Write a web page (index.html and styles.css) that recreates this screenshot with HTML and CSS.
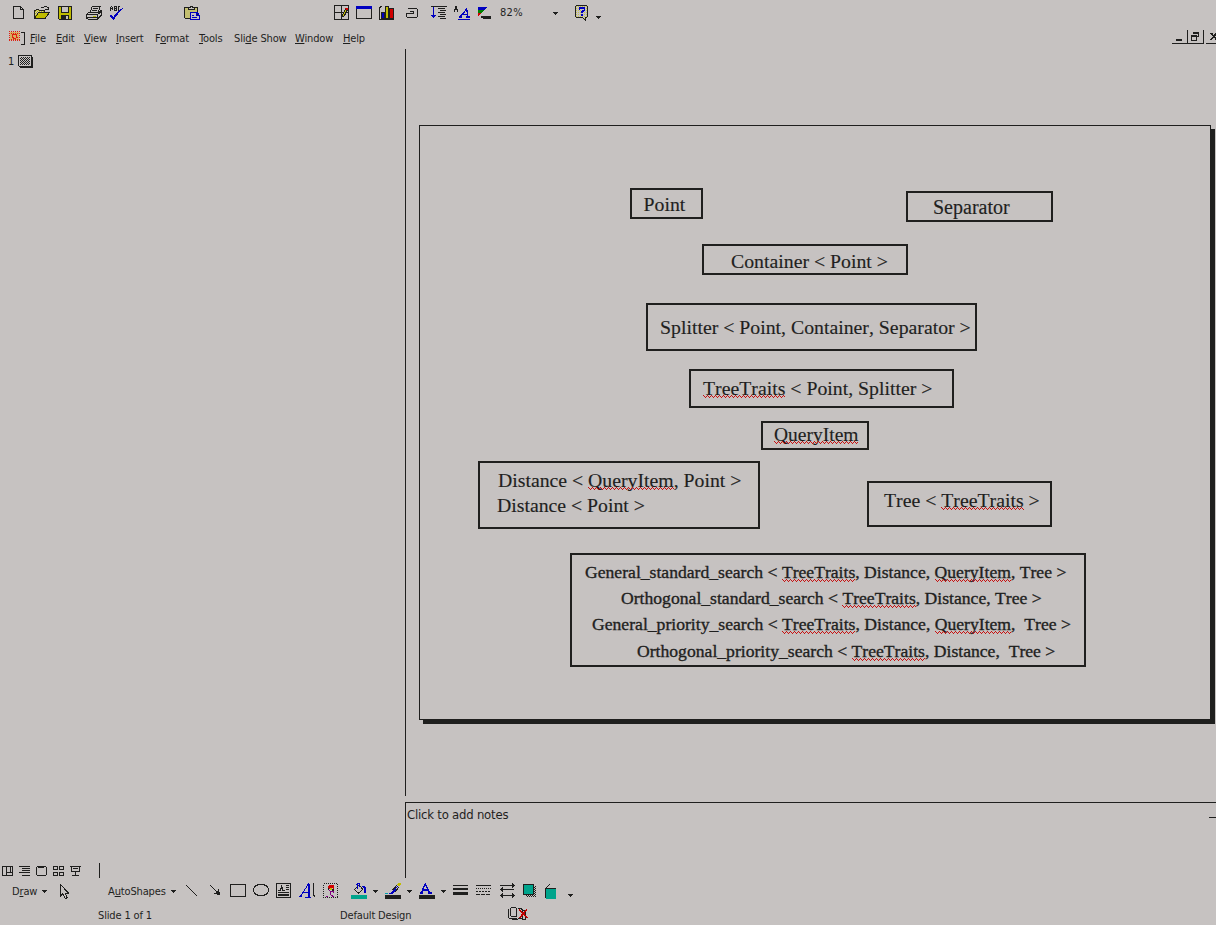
FILE: index.html
```html
<!DOCTYPE html>
<html lang="en">
<head>
<meta charset="utf-8">
<title>Slide editor</title>
<link rel="stylesheet" href="styles.css">
</head>
<body>
<svg width="0" height="0" class="defs">
  <defs>
    <pattern id="dots" width="6" height="6" patternUnits="userSpaceOnUse"><path fill="#1f1f1e" d="M0 0h3v3H0zM3 3h3v3H3z"/></pattern>
    <pattern id="gold" width="6" height="6" patternUnits="userSpaceOnUse"><path fill="#c0bc00" d="M0 0h3v3H0zM3 3h3v3H3z"/></pattern>
    <pattern id="pale" width="6" height="6" patternUnits="userSpaceOnUse"><path fill="#c6c24a" d="M0 0h3v3H0z"/></pattern>
    <symbol id="caret" viewBox="0 0 18 9"><path fill="#1f1f1e" d="M0 0h15v3H0zM3 3h9v3H3zM6 6h3v3H6z"/></symbol>
  </defs>
</svg>
<div class="app">
  <div class="toolbar">
    <svg class="icon" width="14" height="16" viewBox="36 15 42 48"><path d="M40.5 19.5H61.5L70.5 28.5V55.5H40.5ZM61.5 19.5V28.5H70.5"/></svg>
    <svg class="icon" width="18" height="16" viewBox="99 15 54 48"><path class="nf" d="M124 22.500h6l3-3h6l6 6m0-6v9h-9"/><path fill="url(#gold)" d="M103.500 55V31.500h3l3-3h6l3 3h15v6"/><path fill="#c0bc00" d="M103.500 55L115 38.500H148L135 55.500Z"/></svg>
    <svg class="icon" width="16" height="16" viewBox="171 15 48 48"><path fill="#c0bc00" d="M175.500 19.500H214.500V58.500H178.500L175.500 55.500Z"/><path fill="#c6c2c1" d="M184.500 19.500H205.500V37.500H184.500Z"/><path class="solid" d="M183 45h24v15h-24z"/><path fill="#c6c2c1" stroke="none" d="M198 48h6v9h-6z"/></svg>
    <svg class="icon" width="18" height="16" viewBox="255 15 54 48"><path d="M270.500 37.500L276.500 19.500H300.500L294.500 37.500M279 25.500h15M277 31.500h15"/><path fill="#c6c2c1" d="M259.500 43.500L267.500 36.500H297L304.500 31V46L291 58.500H265L259.500 54Z"/><path d="M260 43.500h33v12M295 42l8-8M262 51h29M296 53l8-8"/><path class="yellow" d="M279 47h9v3h-9z"/></svg>
    <svg class="icon" width="18" height="16" viewBox="327 15 54 48"><path d="M331.500 32V22.500l3-3l3 3V31M332 26.500h6M343.500 19V31.500h7V26h-6M343.500 20.500h7V26M361 20.500h-6v10h6"/><path class="blue nf" stroke-width="6" d="M332 46l9 9l10-14"/><path class="blue nf" d="M350 41l10-10l10-6"/></svg>
    <svg class="icon" width="18" height="16" viewBox="549 15 54 48"><path fill="#c4bf70" d="M554.500 22.500H592V52.500L588 55.500H557L554.500 52.500Z"/><path fill="#c6c2c1" d="M564 28.500V22.500h6v-3h7v3h6v6z"/><path class="blue" fill="#c6c2c1" d="M570.500 37.500H591L598.500 46V58.500H570.500ZM576 45h7M576 51h15M590 38v7h8"/></svg>
    <svg class="icon" width="18" height="16" viewBox="39 15 54 48"><path d="M43.500 16.500H85.500V58.500H43.500ZM64.500 17V58M44 37.500H85"/><path fill="#c0bc00" d="M66 49L76 27l6 3L71 51Z"/><path class="redf" d="M75 25h9v6h-6z"/></svg>
    <svg class="icon" width="18" height="16" viewBox="105 15 54 48"><path d="M109.500 19.500H154.500V55.500H109.500Z"/><path class="bluef" d="M108 18h48v9h-48z"/></svg>
    <svg class="icon" width="18" height="16" viewBox="174 15 54 48"><path d="M178.500 25V58.500H222M178 25l6-6M184 59l6-5"/><path fill="#0000c0" d="M184.500 37.500h9V54.500h-9z"/><path fill="#c0bc00" d="M196.500 19.500h9V54.500h-9z"/><path fill="#d00000" d="M208.500 26.500h11V54.500h-11z"/></svg>
    <svg class="icon" width="18" height="16" viewBox="255 15 54 48"><path d="M265 25.500H289L292.500 29V49L289 52.500H262L259.500 49V42L262 40.500H280V34H271"/></svg>
    <svg class="icon" width="18" height="16" viewBox="330 15 54 48"><path class="blue" d="M340.500 22V53M334 46.500h13M337 50.500h7"/><path d="M333 19.500H381M354 25.500h21M360 31.500h18M354 37.500h21M360 43.500h18M354 49.500h21M360 55.500h18"/></svg>
    <svg class="icon" width="18" height="16" viewBox="399 15 54 48"><path class="nf" d="M403 35l5-17l5 17M404 29.500h9"/><path class="blue nf" stroke-width="4" d="M417 51h8M421 50L440 27L444 50M427 43h16M438 51h12M414 58.500h36"/></svg>
    <svg class="icon" width="16" height="16" viewBox="471 15 48 48"><path class="bluef" d="M474 21h27l-9 9h-18z"/><path fill="#008000" stroke="none" d="M474 30h18l-9 9h-9z"/><path class="redf" d="M474 39h9l-9 9z"/><path class="solid" d="M483 48h30v9h-24v-3h-6z"/></svg>
    <span class="zoom">82%</span>
    <svg class="caret zoom-caret" width="6" height="3"><use href="#caret"/></svg>
    <svg class="icon" width="16" height="16" viewBox="762 15 48 48"><path fill="url(#pale)" d="M769 16.500H799L802.500 20V49L799 52.500H796V61L787 52.500H769L766.500 49V20Z"/><path class="blue nf" stroke-width="5" d="M778 29v-6h5h8l2 3v4l-8 6v4M785 43v4"/></svg>
    <svg class="caret more" width="6" height="3"><use href="#caret"/></svg>
  </div>

  <div class="menubar">
    <svg class="icon doc" width="18" height="16" viewBox="24 90 54 48"><path fill="#d8b060" stroke="none" d="M30 96h27v24H30z"/><path class="nf" stroke="#e02010" stroke-dasharray="3 3" d="M27 94.500H60M27 121.500H60M28.500 93V123M58.500 93V123M33 99.500H54M33 117.500H54"/><path class="nf" stroke="#e02010" d="M49 114H40L37 111V105L40 102H49V112H54"/><path d="M63 97.500H73.500V132.500H63"/></svg>
    <span><u>F</u>ile</span><span><u>E</u>dit</span><span><u>V</u>iew</span><span><u>I</u>nsert</span><span>F<u>o</u>rmat</span><span><u>T</u>ools</span><span>Sli<u>d</u>e Show</span><span><u>W</u>indow</span><span><u>H</u>elp</span>
    <svg class="icon controls" width="44" height="15" viewBox="66 27 132 45"><path d="M66 70.500H161.500M112.500 30V72M160.500 30V72M168 70.500H198"/><path class="solid" d="M78 57h18v6H78z"/><path d="M130.500 43V37.500H145.500V50.500H142M124.500 46.500H139.500V61.500H124.500ZM130 39.500h16M124 48.500h16"/><path stroke-width="5" d="M180 40h4l15 18M180 58h4l15-18"/></svg>
  </div>

  <div class="workspace">
    <div class="outline">
      <div class="outline-item"><span>1</span>
        <svg class="icon" width="16" height="14" viewBox="54 165 48 42"><path class="solid" d="M60 171h39v33H60z"/><path fill="#c6c2c1" d="M56.500 166.500H93.500V198.500H58L55.500 196Z"/><path fill="url(#dots)" stroke="none" d="M60 171h30v24H60z"/></svg>
      </div>
      <div class="views">
        <svg class="icon" width="100" height="16" viewBox="0 21 300 48"><path d="M7.500 34.500H37.500V61.500H7.500ZM19.500 34V62M19 52.500H37M31.500 35V52M57 34.500H90M66 40.500H90M66 46.500H90M57 52.500H90M66 61.500H90M112 34.500H136L139.500 38V58L136 61.500H112L109.500 58V38ZM115 37.500h18M160.500 34.500h12v9h-12zM178.500 34.500h12v9h-12zM160.500 52.500h12v9h-12zM178.500 52.500h12v9h-12zM210 34.500H243M214.500 36V48.500H238.500V36M218 41.500h17M226.500 49V61M216 61.500H237M298.500 24V69"/></svg>
      </div>
    </div>
    <div class="editor">
      <div class="stage">
        <div class="slide">
          <div class="node point"><p>Point</p></div>
          <div class="node separator"><p>Separator</p></div>
          <div class="node container"><p>Container &lt; Point &gt;</p></div>
          <div class="node splitter"><p>Splitter &lt; Point, Container, Separator &gt;</p></div>
          <div class="node traits"><p><span class="sp">TreeTraits</span> &lt; Point, Splitter &gt;</p></div>
          <div class="node query"><p><span class="sp">QueryItem</span></p></div>
          <div class="node distance"><p>Distance &lt; <span class="sp">QueryItem</span>, Point &gt;</p><p class="second">Distance &lt; Point &gt;</p></div>
          <div class="node tree"><p>Tree &lt; <span class="sp">TreeTraits</span> &gt;</p></div>
          <div class="node search">
            <p class="general-standard">General_standard_search &lt; <span class="sp">TreeTraits</span>, Distance, <span class="sp">QueryItem</span>, Tree &gt;</p>
            <p class="orthogonal-standard">Orthogonal_standard_search &lt; <span class="sp">TreeTraits</span>, Distance, Tree &gt;</p>
            <p class="general-priority">General_priority_search &lt; <span class="sp">TreeTraits</span>, Distance, <span class="sp">QueryItem</span>,&nbsp; Tree &gt;</p>
            <p class="orthogonal-priority">Orthogonal_priority_search &lt; <span class="sp">TreeTraits</span>, Distance,&nbsp; Tree &gt;</p>
          </div>
        </div>
      </div>
      <div class="notes"><span>Click to add notes</span><i class="tick"></i></div>
    </div>
  </div>

  <div class="drawbar">
    <span>D<u>r</u>aw</span>
    <svg class="caret" width="6" height="3"><use href="#caret"/></svg>
    <svg class="icon" width="12" height="18" viewBox="180 81 36 54"><path fill="#c6c2c1" d="M181.500 88V123L189 116L196 130.500L202 128L195 114H205Z"/></svg>
    <span>A<u>u</u>toShapes</span>
    <svg class="caret" width="6" height="3"><use href="#caret"/></svg>
    <svg class="icon" width="16" height="18" viewBox="15 21 48 54"><path d="M18 30L51 63"/></svg>
    <svg class="icon" width="16" height="18" viewBox="87 21 48 54"><path d="M90 30L115 55"/><path class="solid" d="M120 60l-18-3v-3h6v-3h3v-3h3v-6h3z"/></svg>
    <svg class="icon" width="18" height="18" viewBox="147 21 54 54"><path d="M151.500 28.500H196.500V64.500H151.500Z"/></svg>
    <svg class="icon" width="18" height="18" viewBox="216 21 54 54"><ellipse class="nf" cx="243" cy="45" rx="23" ry="17"/></svg>
    <svg class="icon" width="18" height="18" viewBox="285 21 54 54"><path d="M289.500 25.500H331.500V67.500H289.500ZM295 46.500h6l4-12l4 12h5M300 41.500h9M317 31.500h10M317 37.500h10M317 43.500h10M295 52.500h32M295 57.500h32M295 62.500h32"/></svg>
    <svg class="icon" width="18" height="18" viewBox="354 21 54 54"><path class="blue nf" d="M357 64h10M362 63L384 29V64M368 51h17M376 67h16"/><path class="blue nf" stroke-width="6" d="M386 27V66"/><path d="M399 25.500L401.500 28V61L404 64.500"/></svg>
    <svg class="icon" width="18" height="18" viewBox="426 21 54 54"><path stroke-dasharray="3 3" d="M430.500 25.500H472.500V67.500H430.500Z"/><path class="redf" d="M447 30h12l4 4v9h-5v-4h-9v4h-5v-9z"/><path fill="#c0bc00" stroke="none" d="M449 39h6v6h-6z"/><path class="solid" d="M444 39h4v6h-4zM456 42h6v6h-6z"/><path stroke="#800080" d="M447 46l6 4h6l3 3M450 51v8M438 64h6M453 60l8 6"/></svg>
    <svg class="icon" width="18" height="18" viewBox="510 21 54 54"><path fill="#c6c2c1" d="M523 43L538 30L548 43L535 55Z"/><path class="blue nf" d="M532 42V28l3-3h4v10M529 28h5"/><path class="bluef" d="M543 33h9l6 6v15h-6V42z"/><path class="teal" d="M513 60h48v12h-48z"/></svg>
    <svg class="caret" width="6" height="3"><use href="#caret"/></svg>
    <svg class="icon" width="18" height="18" viewBox="12 21 54 54"><path class="bluef" d="M27 54l9-3l6-9l6 3l-6 9l-6 3h-9z"/><path d="M52 29L38 45M57 36L45 51"/><path class="blue" d="M54 33L42 47"/><path class="yellow" d="M54 24h9v6l-6 4l-6-4z"/><path stroke="#00a0b0" d="M15 55h9"/><path class="solid" d="M15 60h48v12H15z"/></svg>
    <svg class="caret" width="6" height="3"><use href="#caret"/></svg>
    <svg class="icon" width="18" height="18" viewBox="114 21 54 54"><path class="blue nf" stroke-width="4" d="M119 54h9M124 53L136 27L149 53M129 45h16M144 54h11"/><path class="solid" d="M117 60h48v12h-48z"/></svg>
    <svg class="caret" width="6" height="3"><use href="#caret"/></svg>
    <svg class="icon" width="18" height="18" viewBox="216 21 54 54"><path class="solid" d="M219 30h45v3h-45zM219 39h45v6h-45zM219 51h45v9h-45z"/></svg>
    <svg class="icon" width="18" height="18" viewBox="285 21 54 54"><path d="M288 31.500H333"/><path stroke-dasharray="3 3" d="M288 40.500H333"/><path stroke-dasharray="6 3" d="M288 49.500H333"/><path stroke-dasharray="12 3" d="M288 58.500H333"/></svg>
    <svg class="icon" width="18" height="18" viewBox="357 21 54 54"><path d="M360 31.500H402M364 43.500H402M362 61.500H402"/><path class="solid" d="M396 24l9 7.500l-9 7.500zM369 36l-9 7.500l9 7.500zM396 54l9 7.500l-9 7.500zM369 54l-9 7.500l9 7.500z"/></svg>
    <svg class="icon" width="18" height="18" viewBox="426 21 54 54"><path fill="url(#dots)" stroke="none" d="M438 33h30v33h-30z"/><path fill="#00a48c" d="M430.500 28.500H460.500V58.500H430.500Z"/></svg>
    <svg class="icon" width="18" height="18" viewBox="492 21 54 54"><path class="teal" d="M498 39h30v33h-30z"/><path d="M496.500 69V40.500L510 27M498 39.500H528"/></svg>
    <svg class="caret more" width="6" height="3"><use href="#caret"/></svg>
  </div>

  <div class="status">
    <span>Slide 1 of 1</span><span>Default Design</span>
    <svg class="icon" width="22" height="16" viewBox="381 93 66 48"><path class="nf" d="M385.500 102V126L388 129.500H410M391.500 123V100L394 97.500H406L409.500 101V124H391.500M397 133.500H414M415 101h8l4 4v24h-12M429 105h6v27h-9"/><path stroke="#c00000" stroke-width="5" d="M418 104L442 129M441 103L418 130"/></svg>
  </div>
</div>
</body>
</html>
```
FILE: styles.css
```css
* { box-sizing: border-box; }
body {
  margin: 0;
  background: #c6c2c1;
  color: #1f1f1e;
  font: 11px/14px "DejaVu Sans Condensed", "DejaVu Sans", sans-serif;
  font-stretch: condensed;
  letter-spacing: -0.15px;
  overflow: hidden;
}
.app { display: flex; flex-direction: column; width: 1216px; height: 925px; }
.defs { position: absolute; }
u {
  text-decoration: underline;
  text-underline-offset: 1px;
  text-decoration-thickness: 1px;
  text-decoration-skip-ink: none;
}
span { white-space: nowrap; }

.icon { display: block; fill: none; stroke: #1f1f1e; stroke-width: 3; shape-rendering: crispEdges; }
.caret { display: block; shape-rendering: crispEdges; }
.nf { fill: none; }
.solid { fill: #1f1f1e; stroke: none; }
.blue { stroke: #0000c0; }
.bluef { fill: #0000c0; stroke: none; }
.redf { fill: #d00000; stroke: none; }
.yellow { fill: #c0bc00; stroke: none; }
.teal { fill: #00a48c; stroke: none; }

.toolbar {
  display: grid;
  grid-template-columns: 21px 24px 28px 24px 74px 150px 22px 23px 27px 25px 23px 24px 23px 53px 21px 22px 20px;
  height: 30px;
  padding: 5px 0 0 12px;
  align-items: start;
}
.zoom { margin-top: 1px; letter-spacing: 0.3px; }
.zoom-caret { margin-top: 7px; }
.toolbar .more { margin-top: 11px; }

.menubar {
  display: grid;
  grid-template-columns: 22px 26px 28px 32px 39px 44px 35px 61px 48px 829px 44px;
  height: 19px;
  padding-left: 8px;
  align-items: start;
}
.menubar span { margin-top: 2px; }
.controls { margin-top: -1px; }

.workspace { display: grid; grid-template-columns: 405px 811px; height: 829px; }
.outline { display: flex; flex-direction: column; justify-content: space-between; padding: 6px 0 0; }
.outline-item { display: flex; gap: 4px; padding-left: 8px; }
.views { height: 16px; }
.editor { display: flex; flex-direction: column; gap: 6px; }
.stage { height: 747px; border-left: 1px solid #1f1f1e; padding: 76px 0 0 13px; }
.slide {
  position: relative;
  width: 792px;
  height: 595px;
  border: 1px solid #1f1f1e;
  box-shadow: 4px 4px 0 #1f1f1e;
}
.notes {
  display: flex;
  justify-content: space-between;
  height: 76px;
  border: solid #1f1f1e;
  border-width: 1px 0 0 1px;
  padding: 4px 0 0 1px;
  font: 13px/16px "DejaVu Sans Condensed", "DejaVu Sans", sans-serif;
  font-stretch: condensed;
  letter-spacing: -0.22px;
}
.tick { width: 7px; height: 1px; margin-top: 10px; background: #1f1f1e; }

.node {
  position: absolute;
  border: 2px solid #1f1f1e;
  font: 19.8px/24px "Liberation Serif", "Times New Roman", serif;
  font-kerning: none;
  font-variant-ligatures: none;
  letter-spacing: 0;
  white-space: nowrap;
  -webkit-text-stroke: 0.15px #1f1f1e;
}
.node p { margin: 0; }
.point { left: 210px; top: 62px; width: 73px; height: 31px; padding: 2px 0 0 11.5px; }
.separator { left: 486px; top: 65px; width: 147px; height: 31px; padding: 2px 0 0 25px; font-size: 20px; }
.container { left: 282px; top: 118px; width: 206px; height: 31px; padding: 3px 0 0 27px; }
.splitter { left: 226px; top: 177px; width: 331px; height: 48px; padding: 10px 0 0 12px; }
.traits { left: 269px; top: 243px; width: 265px; height: 39px; padding: 5px 0 0 12px; }
.query { left: 341px; top: 295px; width: 108px; height: 29px; padding: 0 0 0 11px; font-size: 19.5px; line-height: 24px; }
.distance { left: 58px; top: 335px; width: 282px; height: 68px; padding: 5px 0 0 18px; font-size: 19.75px; line-height: 25px; }
.distance .second { margin-left: -1px; }
.tree { left: 447px; top: 355px; width: 185px; height: 46px; padding: 5px 0 0 15px; }
.search {
  left: 150px;
  top: 427px;
  width: 516px;
  height: 114px;
  padding: 4px 0 0 13px;
  font-size: 17.64px;
  line-height: 26px;
  -webkit-text-stroke: 0.35px #1f1f1e;
}
.orthogonal-standard { padding-left: 36px; }
.general-priority { padding-left: 7px; }
.orthogonal-priority { padding: 1px 0 0 52px; }

/* Spelling squiggle: three one-pixel rows with a four-pixel period */
.sp { position: relative; }
.sp::after {
  content: "";
  position: absolute;
  left: 0;
  right: 0;
  bottom: 1px;
  height: 3px;
  background:
    repeating-linear-gradient(90deg, #c81010 0 1px, transparent 1px 4px) 0 0 / 100% 1px no-repeat,
    repeating-linear-gradient(90deg, transparent 0 1px, #c81010 1px 2px) 0 1px / 100% 1px no-repeat,
    repeating-linear-gradient(90deg, transparent 0 2px, #c81010 2px 3px, transparent 3px 4px) 0 2px / 100% 1px no-repeat;
}
.search .sp::after { bottom: 0; }

.drawbar {
  display: grid;
  grid-template-columns: 30px 18px 48px 63px 14px 24px 20px 23px 23px 23px 24px 28px 23px 11px 23px 11px 23px 11px 23px 24px 23px 22px 24px 10px;
  height: 29px;
  padding: 4px 0 0 12px;
  align-items: start;
}
.drawbar span { margin-top: 3px; }
.drawbar .caret { margin-top: 8px; }
.drawbar .more { margin-top: 12px; }

.status {
  display: grid;
  grid-template-columns: 242px 167px 22px;
  padding: 2px 0 0 98px;
}
.status .icon { margin-top: -3px; }
```
